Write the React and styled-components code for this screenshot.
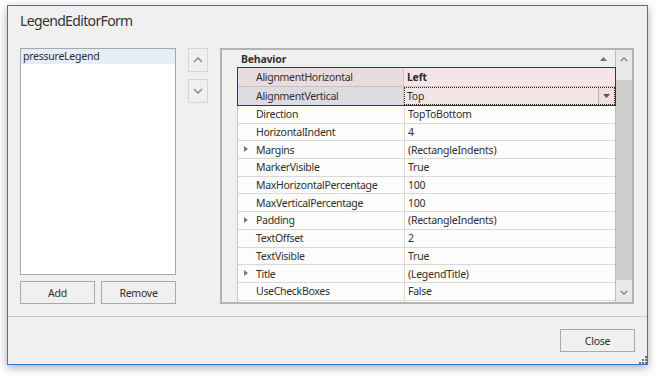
import React from 'react';
import styled, { createGlobalStyle } from 'styled-components';

const FONT = '"Noto Sans", "Open Sans", sans-serif';

const Global = createGlobalStyle`
  html, body { margin: 0; padding: 0; background: #ffffff; }
  body { width: 661px; height: 380px; overflow: hidden; font-family: ${FONT}; }
`;

const Stage = styled.div`
  width: 661px;
  height: 380px;
  box-sizing: border-box;
  padding: 5px 0 0 7px;
`;

const Window = styled.div`
  position: relative;
  width: 641px;
  height: 360px;
  box-sizing: border-box;
  border: 1px solid #2b7bd3;
  background: #f0f0f0;
  box-shadow: 0 3px 9px rgba(0, 0, 0, 0.32);
  display: flex;
  flex-direction: column;
`;

const Title = styled.div`
  height: 20px;
  line-height: 20px;
  padding: 5px 12px 0 12px;
  margin-bottom: 17px;
  font-size: 14px;
  letter-spacing: -0.65px;
  color: #333;
`;

const Body = styled.div`
  display: flex;
  gap: 12px;
  padding: 0 12px;
  height: 256px;
  margin-bottom: 12px;
`;

const LeftCol = styled.div`
  width: 156px;
  display: flex;
  flex-direction: column;
  gap: 6px;
`;

const ListBox = styled.div`
  height: 227px;
  box-sizing: border-box;
  border: 1px solid #a8a8a8;
  background: #ffffff;
`;

const ListItem = styled.div`
  height: 15px;
  line-height: 15px;
  padding-left: 2px;
  font-size: 10.5px;
  letter-spacing: -0.25px;
  color: #2e2e2e;
  background: ${p => (p.$selected ? '#e5edf7' : 'transparent')};
`;

const ButtonRow = styled.div`
  display: flex;
  gap: 6px;
`;

const Button = styled.button`
  width: 75px;
  height: 23px;
  box-sizing: border-box;
  border: 1px solid #a9a9a9;
  background: #f0f0f0;
  font-family: ${FONT};
  font-size: 10.5px;
  letter-spacing: -0.25px;
  color: #2e2e2e;
  padding: 0;
  cursor: default;
`;

const MoverCol = styled.div`
  width: 20px;
  display: flex;
  flex-direction: column;
  gap: 7px;
`;

const MoverButton = styled.div`
  width: 20px;
  height: 24px;
  box-sizing: border-box;
  border: 1px solid #d6d6d6;
  background: #f0f0f0;
  display: flex;
  align-items: center;
  justify-content: center;
`;

const Grid = styled.div`
  width: 414px;
  height: 256px;
  box-sizing: border-box;
  border: 2px solid #b3b3b3;
  display: flex;
`;

const GridContent = styled.div`
  width: 393px;
  display: flex;
  flex-direction: column;
`;

const CategoryHeader = styled.div`
  height: 17px;
  flex: none;
  display: flex;
  align-items: center;
  justify-content: space-between;
  padding: 0 8px 0 19px;
  background: #f0f0f0;
  font-size: 10.5px;
  font-weight: 700;
  letter-spacing: -0.2px;
  color: #333;
`;

const GridBody = styled.div`
  flex: 1;
  display: flex;
`;

const Gutter = styled.div`
  width: 15px;
  background: #f0f0f0;
  border-right: 1px solid #c8c8c8;
`;

const Rows = styled.div`
  flex: 1;
  display: flex;
  flex-direction: column;
  background: #fcfcfb;
`;

const SelectedGroup = styled.div`
  position: relative;
  z-index: 1;
  margin-left: -1px;
  margin-right: -1px;
  border: 1px solid #8e1212;
  display: flex;
  flex-direction: column;
`;

const Row = styled.div`
  display: flex;
  flex: none;
  box-sizing: border-box;
  height: ${p => p.$h};
  border-bottom: ${p => (p.$noLine ? 'none' : `1px solid ${p.$line || '#d8d8d8'}`)};
`;

const NameCell = styled.div`
  position: relative;
  width: ${p => p.$w || '167px'};
  box-sizing: border-box;
  flex: none;
  display: flex;
  align-items: center;
  padding-left: ${p => p.$pad || '18px'};
  border-right: 1px solid ${p => p.$line || '#d8d8d8'};
  background: ${p => p.$bg || 'transparent'};
  font-size: 10.5px;
  letter-spacing: -0.3px;
  color: #2f2f2f;
  white-space: nowrap;
  overflow: hidden;
`;

const ValueCell = styled.div`
  position: relative;
  flex: 1;
  display: flex;
  align-items: center;
  padding-left: 3px;
  background: ${p => p.$bg || 'transparent'};
  font-size: 10.5px;
  letter-spacing: -0.25px;
  font-weight: ${p => (p.$bold ? 700 : 400)};
  color: #2e2e2e;
  white-space: nowrap;
  outline: ${p => (p.$focus ? '1px dotted #2a2a2a' : 'none')};
  outline-offset: -1px;
`;

const ValueText = styled.span`
  flex: 1;
`;

const DropButton = styled.div`
  width: 15px;
  align-self: stretch;
  margin: 1px 1px 1px 0;
  border-left: 1px solid #bfaeb0;
  background: #efdfe0;
  display: flex;
  align-items: center;
  justify-content: center;
`;

const Expander = styled.span`
  position: absolute;
  left: 6px;
  top: 50%;
  margin-top: -3.5px;
  width: 0;
  height: 0;
  border-top: 3.5px solid transparent;
  border-bottom: 3.5px solid transparent;
  border-left: 4px solid #7a7a7a;
`;

const Filler = styled.div`
  flex: 1;
`;

const Scrollbar = styled.div`
  width: 17px;
  box-sizing: border-box;
  border-left: 1px solid #bdbdbd;
  background: #e8e9e7;
  display: flex;
  flex-direction: column;
`;

const ScrollArrow = styled.div`
  height: ${p => p.$h};
  flex: none;
  display: flex;
  align-items: center;
  justify-content: center;
`;

const Thumb = styled.div`
  height: 200px;
  flex: none;
  background: #cdcecb;
`;

const Footer = styled.div`
  flex: 1;
  border-top: 1px solid #c9c9c9;
  display: flex;
  justify-content: flex-end;
  align-items: flex-start;
  padding: 12px 12px 0 0;
`;

const Grip = styled.svg`
  position: absolute;
  right: 0;
  bottom: 0;
`;

const Chevron = ({ up, color = '#8d8d8d', w = 10, h = 6 }) => (
  <svg width={w} height={h} viewBox="0 0 10 6">
    <path
      d={up ? 'M1 5 L5 1 L9 5' : 'M1 1 L5 5 L9 1'}
      fill="none"
      stroke={color}
      strokeWidth="1.6"
    />
  </svg>
);

const Tri = ({ up, color = '#666' }) => (
  <svg width="7" height="4" viewBox="0 0 7 4">
    <path d={up ? 'M0 4 L3.5 0 L7 4 Z' : 'M0 0 L7 0 L3.5 4 Z'} fill={color} />
  </svg>
);

const ROW_H = '17.7px';

const rows = [
  { name: 'Direction', value: 'TopToBottom' },
  { name: 'HorizontalIndent', value: '4' },
  { name: 'Margins', value: '(RectangleIndents)', exp: true },
  { name: 'MarkerVisible', value: 'True' },
  { name: 'MaxHorizontalPercentage', value: '100' },
  { name: 'MaxVerticalPercentage', value: '100' },
  { name: 'Padding', value: '(RectangleIndents)', exp: true },
  { name: 'TextOffset', value: '2' },
  { name: 'TextVisible', value: 'True' },
  { name: 'Title', value: '(LegendTitle)', exp: true },
  { name: 'UseCheckBoxes', value: 'False' },
];

export default function App() {
  return (
    <Stage>
      <Global />
      <Window>
        <Title>LegendEditorForm</Title>
        <Body>
          <LeftCol>
            <ListBox>
              <ListItem $selected>pressureLegend</ListItem>
            </ListBox>
            <ButtonRow>
              <Button>Add</Button>
              <Button>Remove</Button>
            </ButtonRow>
          </LeftCol>
          <MoverCol>
            <MoverButton><Chevron up /></MoverButton>
            <MoverButton><Chevron /></MoverButton>
          </MoverCol>
          <Grid>
            <GridContent>
              <CategoryHeader>
                <span>Behavior</span>
                <Tri up color="#6d6d6d" />
              </CategoryHeader>
              <GridBody>
                <Gutter />
                <Rows>
                  <SelectedGroup>
                    <Row $h="19px" $line="#cdbfc1">
                      <NameCell $w="166px" $bg="#e9dcdd" $line="#d3c5c7">AlignmentHorizontal</NameCell>
                      <ValueCell $bg="#f4e6e7" $bold>Left</ValueCell>
                    </Row>
                    <Row $h="18px" $noLine>
                      <NameCell $w="166px" $bg="#dedae1" $line="#d3c5c7">AlignmentVertical</NameCell>
                      <ValueCell $bg="#f4e6e7" $focus>
                        <ValueText>Top</ValueText>
                        <DropButton><Tri color="#555" /></DropButton>
                      </ValueCell>
                    </Row>
                  </SelectedGroup>
                  {rows.map(r => (
                    <Row key={r.name} $h={ROW_H}>
                      <NameCell>
                        {r.exp && <Expander />}
                        {r.name}
                      </NameCell>
                      <ValueCell>{r.value}</ValueCell>
                    </Row>
                  ))}
                  <Row as={Filler} $noLine>
                    <NameCell />
                    <ValueCell />
                  </Row>
                </Rows>
              </GridBody>
            </GridContent>
            <Scrollbar>
              <ScrollArrow $h="18px"><Chevron up color="#7a7a7a" w={8} h={5} /></ScrollArrow>
              <ScrollArrow $h="12px" />
              <Thumb />
              <Filler />
              <ScrollArrow $h="20px"><Chevron color="#7a7a7a" w={8} h={5} /></ScrollArrow>
            </Scrollbar>
          </Grid>
        </Body>
        <Footer>
          <Button>Close</Button>
        </Footer>
        <Grip width="9" height="9" viewBox="0 0 9 9">
          <g fill="#6e6e6e">
            <rect x="7" y="1" width="2" height="2" />
            <rect x="4" y="4" width="2" height="2" />
            <rect x="7" y="4" width="2" height="2" />
            <rect x="1" y="7" width="2" height="2" />
            <rect x="4" y="7" width="2" height="2" />
            <rect x="7" y="7" width="2" height="2" />
          </g>
        </Grip>
      </Window>
    </Stage>
  );
}
